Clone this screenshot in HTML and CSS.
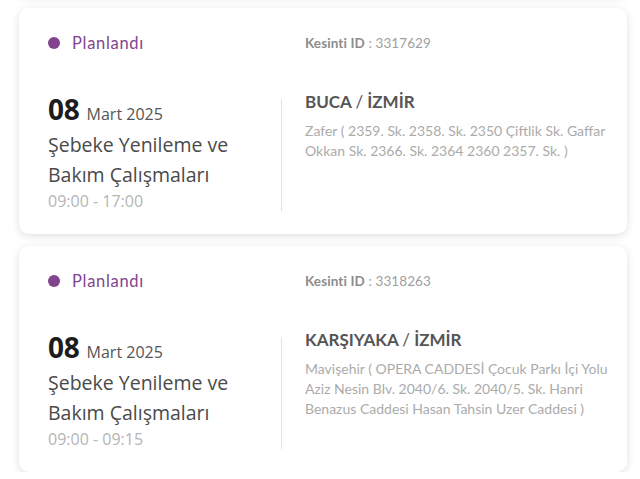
FILE: index.html
```html
<!DOCTYPE html>
<html lang="tr">
<head>
<meta charset="utf-8">
<title>Planlı Kesintiler</title>
<link rel="stylesheet" href="styles.css">
</head>
<body>
<div class="list">
  <div class="card card-prev"></div>

  <article class="card">
    <div class="head">
      <div class="status"><span class="dot"></span>Planlandı</div>
      <div class="outage-id"><b>Kesinti ID</b> : 3317629</div>
    </div>
    <div class="body">
      <div class="when">
        <div class="date"><span class="day">08</span> Mart 2025</div>
        <div class="title">Şebeke Yenileme ve Bakım Çalışmaları</div>
        <div class="time">09:00 - 17:00</div>
      </div>
      <div class="where">
        <div class="place">BUCA <span class="slash">/</span> İZMİR</div>
        <p class="streets">Zafer ( 2359. Sk. 2358. Sk. 2350 Çiftlik Sk. Gaffar Okkan Sk. 2366. Sk. 2364 2360 2357. Sk. )</p>
      </div>
    </div>
  </article>

  <article class="card">
    <div class="head">
      <div class="status"><span class="dot"></span>Planlandı</div>
      <div class="outage-id"><b>Kesinti ID</b> : 3318263</div>
    </div>
    <div class="body">
      <div class="when">
        <div class="date"><span class="day">08</span> Mart 2025</div>
        <div class="title">Şebeke Yenileme ve Bakım Çalışmaları</div>
        <div class="time">09:00 - 09:15</div>
      </div>
      <div class="where">
        <div class="place">KARŞIYAKA <span class="slash">/</span> İZMİR</div>
        <p class="streets">Mavişehir ( OPERA CADDESİ Çocuk Parkı İçi Yolu Aziz Nesin Blv. 2040/6. Sk. 2040/5. Sk. Hanri Benazus Caddesi Hasan Tahsin Uzer Caddesi )</p>
      </div>
    </div>
  </article>
</div>
</body>
</html>
```

FILE: styles.css
```css
html, body {
  margin: 0;
  padding: 0;
  background: #ffffff;
}

body {
  font-family: "Lato", "Noto Sans", sans-serif;
  overflow: hidden;
}

.list {
  display: flex;
  flex-direction: column;
  gap: 12px;
  padding: 8px 13px 0 19px;
}

.card {
  background: #ffffff;
  border-radius: 10px;
  box-shadow: 0 2px 8px rgba(0, 0, 0, 0.13);
  padding: 24px 16px 24px 29px;
  height: 226px;
  box-sizing: border-box;
}

.card-prev {
  margin-top: -238px;
  padding: 0;
}

.head {
  display: grid;
  grid-template-columns: 233px 1fr;
  height: 22px;
  line-height: 22px;
}

.status {
  display: flex;
  align-items: center;
  gap: 12px;
  color: #82448f;
  font-size: 16.5px;
  letter-spacing: 0.7px;
}

.dot {
  width: 12px;
  height: 12px;
  border-radius: 50%;
  background: #82448f;
}

.outage-id {
  padding-left: 24px;
  font-size: 13.5px;
  color: #a0a0a0;
  letter-spacing: 0.1px;
}

.outage-id b {
  color: #8c8c8c;
  font-weight: 700;
}

.body {
  display: grid;
  grid-template-columns: 233px 1fr;
  margin-top: 45px;
}

.when {
  font-family: "Open Sans", "Noto Sans", sans-serif;
}

.date {
  margin-top: -2px;
  line-height: 24px;
  font-size: 16px;
  color: #555555;
}

.day {
  font-size: 28px;
  font-weight: 700;
  color: #1c1c1c;
  letter-spacing: -0.3px;
  margin-right: 3px;
}

.title {
  margin-top: 4px;
  font-size: 19.5px;
  line-height: 30px;
  color: #4a4a4a;
}

.time {
  margin-top: 1px;
  font-size: 16px;
  line-height: 20px;
  color: #b5b5b5;
}

.where {
  border-left: 1px solid #e2e2e2;
  padding-left: 23px;
}

.place {
  margin-top: -6px;
  font-size: 17px;
  line-height: 18px;
  font-weight: 700;
  color: #555555;
}

.slash {
  font-weight: 400;
}

.streets {
  margin: 10px 0 0;
  font-size: 14px;
  line-height: 20px;
  color: #ababab;
}
```
